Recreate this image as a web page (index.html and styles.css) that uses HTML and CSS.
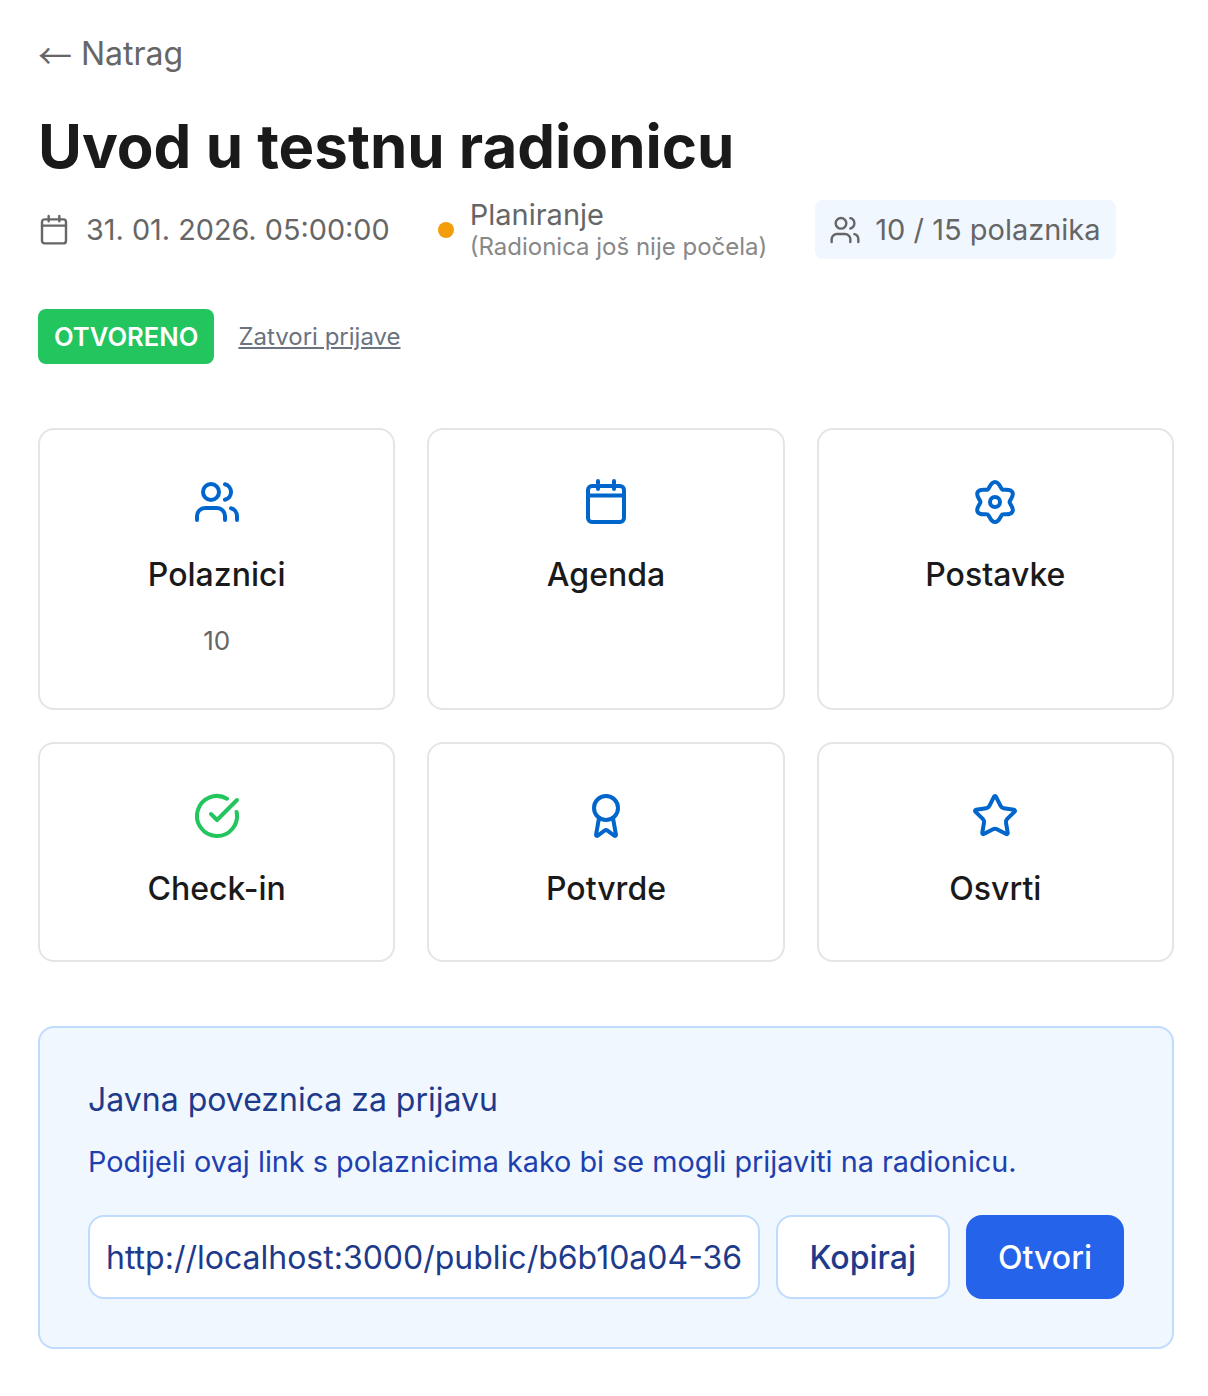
FILE: index.html
```html
<!DOCTYPE html>
<html lang="en">
<head>
  <meta charset="UTF-8">
  <title>Uvod u testnu radionicu</title>
  <link rel="stylesheet" href="styles.css">
</head>
<body>
  <main class="page">
    <a class="back" href="#"><span class="back-arrow">←</span> Natrag</a>
    <h1 class="title">Uvod u testnu radionicu</h1>

    <section class="meta">
      <div class="meta-date">
        <svg class="meta-icon" viewBox="0 0 24 24"><path d="M8 1.5v4M16 1.5v4M3 8.75h18"/><rect x="3" y="4" width="18" height="18" rx="2"/></svg>
        <span>31. 01. 2026. 05:00:00</span>
      </div>
      <div class="meta-status">
        <span class="status-dot"></span>
        <div class="status-text">
          <div class="status-name">Planiranje</div>
          <div class="status-note">(Radionica još nije počela)</div>
        </div>
      </div>
      <div class="meta-count">
        <svg class="meta-icon" viewBox="0 0 24 24"><path d="M16 21v-2a4 4 0 0 0-4-4H6a4 4 0 0 0-4 4v2"/><circle cx="9" cy="7" r="4"/><path d="M22 21v-2a4 4 0 0 0-3-3.87M16 3.13a4 4 0 0 1 0 7.75"/></svg>
        <span>10 / 15 polaznika</span>
      </div>
    </section>

    <section class="signup">
      <span class="signup-badge">OTVORENO</span>
      <a class="signup-link" href="#">Zatvori prijave</a>
    </section>

    <section class="cards">
      <a class="card" href="#">
        <svg class="card-icon" viewBox="0 0 24 24"><path d="M16 21v-2a4 4 0 0 0-4-4H6a4 4 0 0 0-4 4v2"/><circle cx="9" cy="7" r="4"/><path d="M22 21v-2a4 4 0 0 0-3-3.87M16 3.13a4 4 0 0 1 0 7.75"/></svg>
        <div class="card-title">Polaznici</div>
        <div class="card-count">10</div>
      </a>
      <a class="card" href="#">
        <svg class="card-icon" viewBox="0 0 24 24"><path d="M8 1.5v4M16 1.5v4M3 8.75h18"/><rect x="3" y="4" width="18" height="18" rx="2"/></svg>
        <div class="card-title">Agenda</div>
      </a>
      <a class="card" href="#">
        <svg class="card-icon" viewBox="0 0 48 48"><path class="thick" d="M24 4C28.5 4 29.52 10.44 31.25 11.44C32.98 12.44 39.07 10.1 41.32 14C43.57 17.9 38.5 22 38.5 24C38.5 26 43.57 30.1 41.32 34C39.07 37.9 32.98 35.56 31.25 36.56C29.52 37.56 28.5 44 24 44C19.5 44 18.48 37.56 16.75 36.56C15.02 35.56 8.93 37.9 6.68 34C4.43 30.1 9.5 26 9.5 24C9.5 22 4.43 17.9 6.68 14C8.93 10.1 15.02 12.44 16.75 11.44C18.48 10.44 19.5 4 24 4Z"/><circle class="thick" cx="24" cy="24" r="5"/></svg>
        <div class="card-title">Postavke</div>
      </a>
      <a class="card" href="#">
        <svg class="card-icon card-icon-green" viewBox="0 0 24 24"><path d="M21.801 10A10 10 0 1 1 17 3.335"/><path d="m9 11 3 3L22 4"/></svg>
        <div class="card-title">Check-in</div>
      </a>
      <a class="card" href="#">
        <svg class="card-icon" viewBox="0 0 24 24"><path d="m15.477 12.89 1.515 8.526a.5.5 0 0 1-.81.47l-3.58-2.687a1 1 0 0 0-1.197 0l-3.586 2.686a.5.5 0 0 1-.81-.469l1.514-8.526"/><circle cx="12" cy="8" r="6"/></svg>
        <div class="card-title">Potvrde</div>
      </a>
      <a class="card" href="#">
        <svg class="card-icon" viewBox="0 0 24 24"><path d="M11.525 2.295a.53.53 0 0 1 .95 0l2.31 4.679a2.123 2.123 0 0 0 1.595 1.16l5.166.756a.53.53 0 0 1 .294.904l-3.736 3.638a2.123 2.123 0 0 0-.611 1.878l.882 5.14a.53.53 0 0 1-.771.56l-4.618-2.428a2.122 2.122 0 0 0-1.973 0L6.396 21.01a.53.53 0 0 1-.77-.56l.881-5.139a2.122 2.122 0 0 0-.611-1.879L2.16 9.795a.53.53 0 0 1 .294-.906l5.165-.755a2.122 2.122 0 0 0 1.597-1.16z"/></svg>
        <div class="card-title">Osvrti</div>
      </a>
    </section>

    <section class="share">
      <h2 class="share-title">Javna poveznica za prijavu</h2>
      <p class="share-text">Podijeli ovaj link s polaznicima kako bi se mogli prijaviti na radionicu.</p>
      <div class="share-row">
        <input class="share-input" type="text" readonly value="http://localhost:3000/public/b6b10a04-36d1-4c7e-9a52-1f0e8d3c7b21">
        <button class="share-copy" type="button">Kopiraj</button>
        <button class="share-open" type="button">Otvori</button>
      </div>
    </section>
  </main>
</body>
</html>
```

FILE: styles.css
```css
* {
  box-sizing: border-box;
}
body {
  margin: 0;
  background: #fff;
  font-family: Inter, "Noto Sans", sans-serif;
  color: #1a1a1a;
}
a {
  text-decoration: none;
  color: inherit;
}
.page {
  padding: 32px 34px 47px 38px;
}
.back {
  display: block;
  font-size: 32px;
  line-height: 44px;
  color: #666;
}
.back-arrow {
  font-family: "Noto Sans CJK JP", sans-serif;
  font-size: 34px;
  line-height: 0;
  vertical-align: -4px;
}
.title {
  margin: 34px 0 0;
  font-size: 60px;
  line-height: 72px;
  font-weight: 700;
}

/* date, status, count */
.meta {
  display: flex;
  align-items: center;
  gap: 48px;
  margin-top: 14px;
  color: #666;
}
.meta-date, .meta-status, .meta-count {
  display: flex;
  align-items: center;
}
.meta-date {
  gap: 16px;
  font-size: 28.8px;
}
.meta-icon {
  width: 32px;
  height: 32px;
  fill: none;
  stroke: currentColor;
  stroke-width: 1.8;
  stroke-linecap: round;
  stroke-linejoin: round;
}
.meta-status {
  gap: 16px;
}
.status-dot {
  width: 16px;
  height: 16px;
  border-radius: 50%;
  background: #f59e0b;
}
.status-text {
  padding-top: 3px;
}
.status-name {
  font-size: 29px;
  line-height: 32px;
}
.status-note {
  font-size: 24px;
  line-height: 32px;
  color: #888;
}
.meta-count {
  gap: 14px;
  height: 59px;
  padding: 0 15px 0 14px;
  border-radius: 8px;
  background: #f0f7ff;
  font-size: 29px;
}

.signup {
  display: flex;
  align-items: center;
  gap: 24px;
  margin-top: 46px;
}
.signup-badge {
  padding: 0 16px;
  line-height: 55px;
  border-radius: 8px;
  background: #22c55e;
  color: #fff;
  font-size: 25.6px;
  font-weight: 600;
}
.signup-link {
  font-size: 24px;
  color: #6b7280;
  text-decoration: underline;
}

.cards {
  display: grid;
  grid-template-columns: repeat(3, 1fr);
  gap: 32px;
  margin-top: 64px;
}
.card {
  display: flex;
  flex-direction: column;
  align-items: center;
  padding: 48px 16px;
  border: 2px solid #e5e5e5;
  border-radius: 16px;
  background: #fff;
}
.card-icon {
  width: 48px;
  height: 48px;
  fill: none;
  stroke: #0066cc;
  stroke-width: 2;
  stroke-linecap: round;
  stroke-linejoin: round;
}
.card-icon .thick {
  stroke-width: 4;
}
.card-icon-green {
  stroke: #22c55e;
}
.card-title {
  margin: 25px 0 -1px;
  font-size: 32px;
  line-height: 48px;
  font-weight: 500;
}
.card-count {
  margin: 23px 0 -1px;
  font-size: 26px;
  line-height: 40px;
  color: #666;
}

/* public link panel */
.share {
  margin-top: 64px;
  padding: 48px;
  border: 2px solid #bfdbfe;
  border-radius: 16px;
  background: #f0f7ff;
}
.share-title {
  margin: 0;
  font-size: 32px;
  line-height: 48px;
  font-weight: 400;
  color: #1e3a8a;
}
.share-text {
  margin: 14px 0 0;
  font-size: 28.8px;
  line-height: 48px;
  color: #1e40af;
}
.share-row {
  display: flex;
  gap: 16px;
  margin-top: 29px;
}
.share-input {
  flex: 1;
  min-width: 0;
  height: 84px;
  padding: 0 16px;
  border: 2px solid #bfdbfe;
  border-radius: 16px;
  background: #fff;
  font-family: inherit;
  font-size: 32px;
  color: #1e3a8a;
}
.share-copy, .share-open {
  height: 84px;
  padding: 0 32px;
  border-radius: 16px;
  font-family: inherit;
  font-size: 32px;
  font-weight: 500;
}
.share-copy {
  border: 2px solid #bfdbfe;
  background: #fff;
  color: #1e3a8a;
}
.share-open {
  border: none;
  background: #2563eb;
  color: #fff;
}
```
